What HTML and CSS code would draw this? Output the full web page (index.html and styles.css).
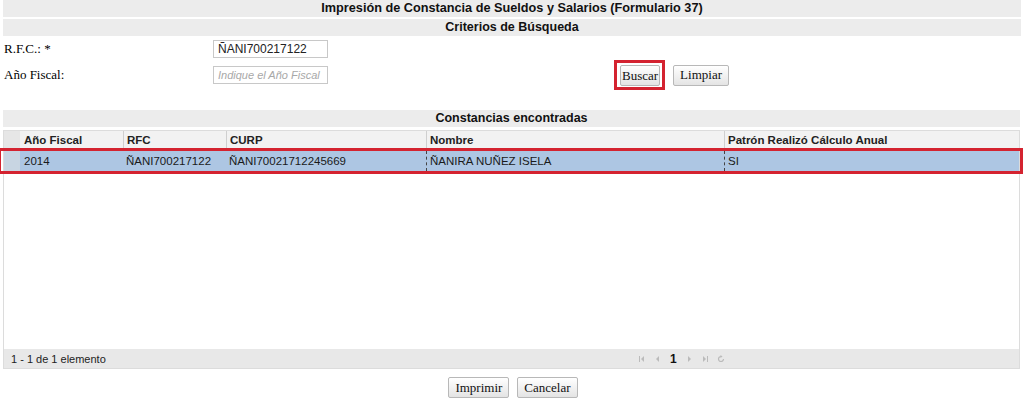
FILE: index.html
```html
<!DOCTYPE html>
<html lang="es">
<head>
<meta charset="utf-8">
<title>Impresión de Constancia</title>
<link rel="stylesheet" href="styles.css">
</head>
<body>
<div class="page">
  <div class="bar bar-title">Impresión de Constancia de Sueldos y Salarios (Formulario 37)</div>
  <div class="bar bar-sub">Criterios de Búsqueda</div>

  <div class="form">
    <div class="form-row">
      <label class="lbl">R.F.C.: *</label>
      <input class="field" type="text" value="ÑANI700217122">
    </div>
    <div class="form-row row-2">
      <label class="lbl">Año Fiscal:</label>
      <input class="field" type="text" placeholder="Indique el Año Fiscal">
      <div class="actions">
        <span class="hl"><button class="btn btn-tight">Buscar</button></span>
        <button class="btn">Limpiar</button>
      </div>
    </div>
  </div>

  <div class="bar bar-results">Constancias encontradas</div>

  <div class="grid">
    <div class="grid-head">
      <div class="c c0"></div>
      <div class="c c1">Año Fiscal</div>
      <div class="c c2">RFC</div>
      <div class="c c3">CURP</div>
      <div class="c c4">Nombre</div>
      <div class="c c5">Patrón Realizó Cálculo Anual</div>
    </div>
    <div class="grid-row sel">
      <div class="c c0"></div>
      <div class="c c1">2014</div>
      <div class="c c2">ÑANI700217122</div>
      <div class="c c3">ÑANI70021712245669</div>
      <div class="c c4 dash">ÑANIRA NUÑEZ ISELA</div>
      <div class="c c5 dash">SI</div>
    </div>
    <div class="grid-body"></div>
    <div class="pager">
      <span class="count">1 - 1 de 1 elemento</span>
      <div class="nav">
        <svg width="8" height="8" viewBox="0 0 8 8"><rect x="1" y="1" width="1" height="6" fill="#bbb"/><path d="M6 1 L3 4 L6 7 Z" fill="#bbb"/></svg>
        <svg width="8" height="8" viewBox="0 0 8 8"><path d="M5 1 L2 4 L5 7 Z" fill="#bbb"/></svg>
        <span class="pg">1</span>
        <svg width="8" height="8" viewBox="0 0 8 8"><path d="M3 1 L6 4 L3 7 Z" fill="#bbb"/></svg>
        <svg width="8" height="8" viewBox="0 0 8 8"><path d="M2 1 L5 4 L2 7 Z" fill="#bbb"/><rect x="6" y="1" width="1" height="6" fill="#bbb"/></svg>
        <svg width="8" height="8" viewBox="0 0 8 8"><path d="M4 1.5 A2.5 2.5 0 1 0 6.5 4" stroke="#bbb" stroke-width="1.2" fill="none"/><path d="M3.5 0 L5.5 1.5 L3.5 3 Z" fill="#bbb"/></svg>
      </div>
    </div>
  </div>

  <div class="bottom">
    <button class="btn">Imprimir</button>
    <button class="btn">Cancelar</button>
  </div>
</div>
</body>
</html>
```

FILE: styles.css
```css
* { box-sizing: border-box; }
html, body { margin: 0; padding: 0; background: #fff; }
body { width: 1024px; height: 399px; overflow: hidden; font-family: "Liberation Sans", Arial, sans-serif; color: #000; }

.page { padding: 0 3px; }

.bar {
  background: #ececec;
  height: 17px;
  line-height: 17px;
  text-align: center;
  font-weight: bold;
  font-size: 12.5px;
  color: #111;
}
.bar-title { font-size: 12.7px; }
.bar-sub { margin-top: 2px; }
.bar-results { margin-top: 26px; width: 1017px; }

.form { padding-top: 3px; position: relative; }
.form-row {
  display: flex;
  align-items: center;
  height: 18px;
  margin-top: 1px;
}
.row-2 { margin-top: 8px; }
.lbl {
  width: 210px;
  padding-left: 1px;
  font-family: "Liberation Serif", "Times New Roman", serif;
  font-size: 13px;
}
.field {
  width: 115px;
  height: 18px;
  border: 1px solid #c8c8c8;
  padding: 0 4px;
  font-family: "Liberation Sans", Arial, sans-serif;
  font-size: 12px;
  color: #222;
  outline: none;
}
.field::placeholder { color: #a8a8a8; font-style: italic; font-size: 11px; }

.actions {
  display: flex;
  align-items: center;
  margin-left: 286px;
  gap: 8px;
}
.hl {
  border: 3px solid #d42330;
  padding: 2px 2px 1px 3px;
  display: inline-flex;
}
.btn {
  font-family: "Liberation Serif", "Times New Roman", serif;
  font-size: 13px;
  color: #111;
  height: 21px;
  padding: 0 6px;
  border: 1px solid #b8b8b8;
  border-radius: 2px;
  background: linear-gradient(#ffffff, #e4e4e4);
}
.btn-tight { padding: 0 1px; }

.grid {
  margin-top: 3px;
  width: 1017px;
  border: 1px solid #dcdcdc;
  font-size: 11.5px;
}
.grid-head, .grid-row { display: flex; height: 19px; line-height: 19px; }
.grid-head { background: #f2f2f2; font-weight: bold; color: #222; }
.grid-head .c { border-left: 1px solid #cfcfcf; }
.grid-head .c0 { border-left: none; background: #e6e6e6; }
.c { padding-left: 3px; white-space: nowrap; overflow: hidden; }
.c0 { width: 16px; padding: 0; }
.c1 { width: 103px; padding-left: 4px; }
.c2 { width: 103px; }
.c3 { width: 200px; }
.c4 { width: 298px; }
.c5 { flex: 1; }
.grid-head .c1 { border-left: none; }

.grid-row.sel { background: #adc6e3; color: #1a1a1a; position: relative; margin-top: 1px; height: 20px; line-height: 20px; }
.grid-row.sel .c0 { background: #c8d5e2; }
.grid-row.sel::after {
  content: "";
  position: absolute;
  left: -6px; right: -4px; top: -3px; bottom: -3px;
  border: 3px solid #d42330;
  pointer-events: none;
}
.dash { border-left: 1px dashed #444; }

.grid-body { height: 178px; }

.pager {
  display: flex;
  align-items: center;
  height: 19px;
  background: #e8e8e8;
  font-size: 11px;
  color: #222;
}
.count { padding-left: 7px; width: 634px; }
.nav { display: flex; align-items: center; gap: 8px; }
.pg { font-weight: bold; font-size: 12px; color: #111; }

.bottom {
  display: flex;
  justify-content: center;
  gap: 8px;
  margin-top: 8px;
  padding-left: 2px;
}
```
